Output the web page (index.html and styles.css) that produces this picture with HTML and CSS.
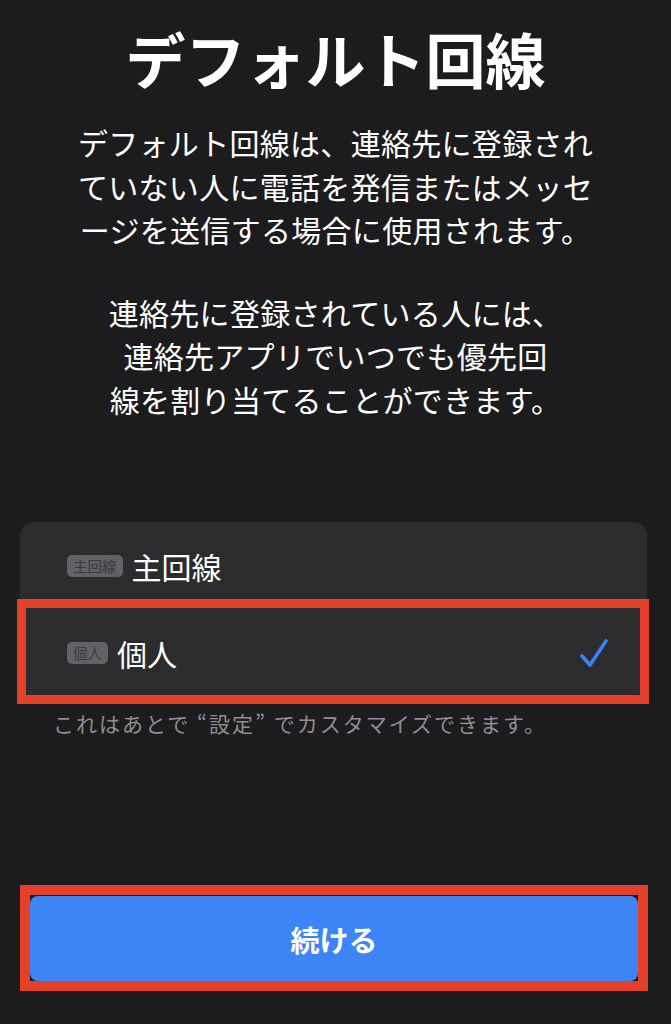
FILE: index.html
```html
<!DOCTYPE html>
<html lang="ja">
<head>
    <meta charset="UTF-8">
    <meta name="viewport" content="width=device-width, initial-scale=1.0">
    <title>デフォルト回線</title>
    <link rel="stylesheet" href="styles.css">
</head>
<body>
    <div class="screen">
        <h1>デフォルト回線</h1>

        <p class="lead">
            デフォルト回線は、連絡先に登録され<br>
            ていない人に電話を発信またはメッセ<br>
            ージを送信する場合に使用されます。
        </p>
        <p class="lead">
            連絡先に登録されている人には、<br>
            連絡先アプリでいつでも優先回<br>
            線を割り当てることができます。
        </p>

        <div class="line-list">
            <div class="line-row">
                <span class="badge">主回線</span>
                <span class="line-name">主回線</span>
            </div>
            <div class="line-row selected marked">
                <span class="badge">個人</span>
                <span class="line-name">個人</span>
                <svg class="check" width="30" height="32" viewBox="0 0 30 32">
                    <polyline points="3,19 11,28 27,4" fill="none" stroke="#3a82f6" stroke-width="3.6" stroke-linecap="round" stroke-linejoin="round"/>
                </svg>
            </div>
        </div>

        <p class="note">これはあとで “設定” でカスタマイズできます。</p>

        <div class="actions">
            <button class="continue marked">続ける</button>
        </div>
    </div>
</body>
</html>
```

FILE: styles.css
```css
body {
    margin: 0;
    background: #1c1c1e;
    color: #fff;
    font-family: "Noto Sans CJK JP", "Noto Sans", sans-serif;
}

.screen {
    width: 671px;
    min-height: 1024px;
    padding-top: 22px;
    box-sizing: border-box;
}

h1 {
    margin: 0;
    font-size: 60px;
    font-weight: 700;
    line-height: 72px;
    text-align: center;
}

.lead {
    margin: 27px 0 0;
    font-size: 30px;
    line-height: 43.5px;
    letter-spacing: 0.3px;
    text-align: center;
}

.lead + .lead {
    margin-top: 39px;
}

.line-list {
    margin: 101px 24px 0 20px;
    background: #2c2c2e;
    border-radius: 14px;
}

.line-row {
    position: relative;
    display: flex;
    align-items: center;
    height: 87px;
    padding: 0 38px 0 47px;
}

.badge {
    display: inline-block;
    padding: 0 6px;
    height: 22px;
    line-height: 22px;
    font-size: 14.5px;
    color: #3a3a3d;
    background: #626266;
    border-radius: 5px;
    margin-right: 9px;
}

.line-name {
    font-size: 30px;
    line-height: 40px;
}

.check {
    margin-left: auto;
}

.note {
    margin: 13px 0 0 53px;
    font-size: 21px;
    line-height: 28px;
    letter-spacing: 2px;
    color: #8d8d93;
}

.actions {
    margin-top: 159px;
    padding: 0 33px 0 30px;
}

.continue {
    position: relative;
    display: block;
    width: 100%;
    height: 85px;
    border: none;
    border-radius: 8px;
    background: #3d85f6;
    color: #fff;
    font-family: inherit;
    font-size: 29px;
    font-weight: 700;
}

/* red highlight frames */
.marked::after {
    content: "";
    position: absolute;
    border: 9px solid #e5402a;
}

.line-row.marked::after {
    top: -10px;
    bottom: -8px;
    left: -3px;
    right: -2px;
}

.continue.marked::after {
    top: -11px;
    bottom: -10px;
    left: -10px;
    right: -10px;
    border-width: 10px;
}
```
